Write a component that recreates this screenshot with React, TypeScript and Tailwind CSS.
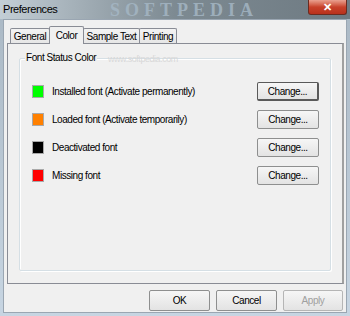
import React from 'react';

const rows = [
  { color: 'bg-[#00ff00]', label: 'Installed font (Activate permanently)' },
  { color: 'bg-[#ff8000]', label: 'Loaded font (Activate temporarily)' },
  { color: 'bg-[#000000]', label: 'Deactivated font' },
  { color: 'bg-[#ff0000]', label: 'Missing font' },
];

const tabs = [
  { name: 'General', w: 'w-[40px]' },
  { name: 'Color', w: 'w-[35px]' },
  { name: 'Sample Text', w: 'w-[57px]' },
  { name: 'Printing', w: 'w-[38px]' },
];

function WinButton({ children, def, disabled, className }: { children: React.ReactNode; def?: boolean; disabled?: boolean; className?: string }) {
  return (
    <button
      className={`flex items-center justify-center rounded-[2px] border bg-gradient-to-b from-[#f6f6f6] to-[#e3e3e3] ${
        def ? 'border-[#5a5a5a] border-r-2 border-b-2' : 'border-[#8e8f8f]'
      } ${disabled ? 'text-[#a0a0a0] border-[#b5b5b5]' : 'text-black'} ${className ?? ''}`}
    >
      {children}
    </button>
  );
}

export default function App() {
  return (
    <div
      className="w-[350px] h-[316px] overflow-hidden flex flex-col bg-gradient-to-b from-[#aab8c4] to-[#c7d5e2] text-[10px] tracking-[-0.45px]"
      style={{ fontFamily: '"Liberation Sans", Arial, sans-serif' }}
    >
      {/* Title bar */}
      <div className="relative h-[19px] shrink-0 flex items-center bg-gradient-to-r from-[#c3ced6] via-[#7d8a92] to-[#6e7a82]">
        <span
          className="absolute left-[110px] top-[1px] text-[18px] leading-[18px] font-bold tracking-[5px] text-[#a6b8c6] opacity-80"
          style={{ fontFamily: '"Liberation Serif", serif' }}
        >
          SOFTPEDIA
        </span>
        <span className="relative pl-[3px] text-[11px] text-black">Preferences</span>
        <div className="absolute right-[3px] top-0 w-[39px] h-[15px] rounded-b-[3px] border border-t-0 border-[#6b2b20] bg-gradient-to-b from-[#e9a08f] via-[#c8412a] to-[#b8311c] flex items-center justify-center text-white text-[11px] font-bold leading-none tracking-normal">
          ✕
        </div>
      </div>

      {/* Client area */}
      <div className="flex-1 mx-[3px] mb-[3px] bg-[#f0f0f0] border border-[#9aa6b2] flex flex-col">
        <div className="mx-[3px] mt-[6px]">
          {/* tabs */}
          <div className="flex h-[17px] items-end pl-[3px]">
            {tabs.map((t) => (
              <div
                key={t.name}
                className={`${t.w} justify-center border border-b-0 border-[#898c95] rounded-t-[2px] flex ${
                  t.name === 'Color'
                    ? 'h-[18px] -mb-[1px] -ml-[1px] bg-[#f0f0f0] relative z-10 items-start pt-[1px]'
                    : 'h-[15px] -ml-[1px] first:ml-0 bg-gradient-to-b from-[#f3f3f3] to-[#e6e6e6] items-center'
                }`}
              >
                {t.name}
              </div>
            ))}
          </div>
          {/* panel */}
          <div className="h-[241px] w-[337px] border border-[#898c95] border-r-2 border-r-[#a0a0a0] bg-[#f0f0f0] px-[11px] pt-[14px] pb-[12px]">
            <div className="relative h-full border border-[#d5dfe5] rounded-[2px] shadow-[inset_1px_1px_0_#fff,1px_1px_0_#fff]">
              <span className="absolute -top-[8px] left-[5px] bg-[#f0f0f0] px-[1px] text-black leading-[14px]">Font Status Color</span>
              <span className="absolute -top-[6px] left-[88px] text-[9px] text-[#d8d8d8] leading-[12px]">www.softpedia.com</span>
              <div className="flex flex-col pt-[23px] pl-[12px] pr-[11px] gap-[9px]">
                {rows.map((r) => (
                  <div key={r.label} className="flex items-center h-[19px]">
                    <div className={`w-[12px] h-[13px] border border-[#a9a9a9] ${r.color}`} />
                    <span className="ml-[8px] text-black flex-1">{r.label}</span>
                    <WinButton def={r.label.startsWith('Installed')} className="w-[62px] h-[19px]">
                      Change...
                    </WinButton>
                  </div>
                ))}
              </div>
            </div>
          </div>
        </div>
        {/* bottom buttons */}
        <div className="flex justify-end gap-[6px] pr-[3px] mt-[6px]">
          <WinButton className="w-[61px] h-[21px]">OK</WinButton>
          <WinButton className="w-[61px] h-[21px]">Cancel</WinButton>
          <WinButton disabled className="w-[60px] h-[21px]">Apply</WinButton>
        </div>
      </div>
    </div>
  );
}
